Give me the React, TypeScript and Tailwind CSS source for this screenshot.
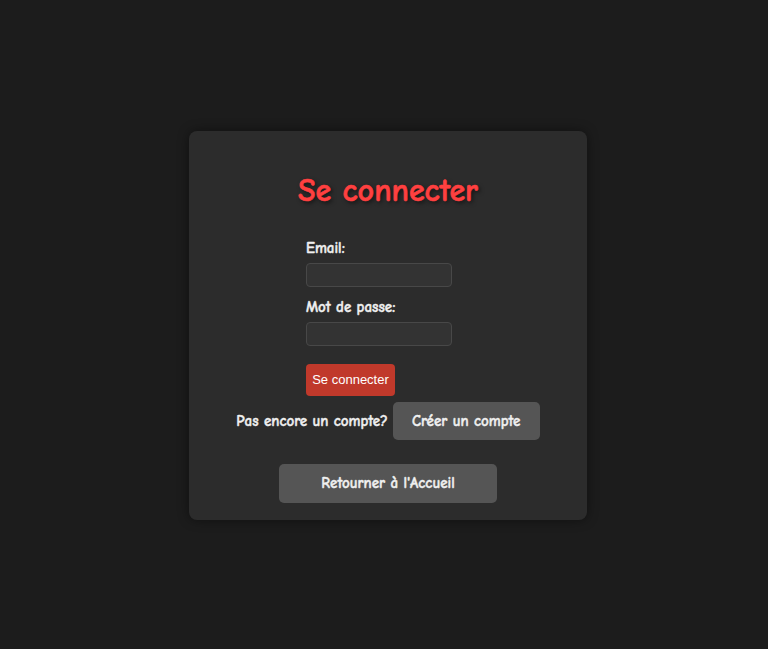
import React from 'react';

export default function App() {
  return (
    <div className="min-h-screen w-full bg-[#1c1c1c] flex items-start justify-center pt-[131px] pl-[8px] font-['Comic_Sans_MS','Comic_Neue',cursive]">
      <div className="w-[398px] h-[389px] bg-[#2c2c2c] rounded-lg shadow-[0_0_12px_rgba(0,0,0,0.45)] flex flex-col items-center pt-[43px]">
        <h1 className="text-[32px] leading-[34px] font-bold text-[#ff4040] [-webkit-text-stroke:0.6px_#ff4040] [text-shadow:2px_2px_4px_rgba(0,0,0,0.6)]">
          Se connecter
        </h1>

        <form className="w-[164px] mt-[31px] flex flex-col items-start" onSubmit={e => e.preventDefault()}>
          <label className="text-[15px] leading-[18px] font-bold text-[#f0f0f0] [-webkit-text-stroke:0.4px_#f0f0f0]">Email:</label>
          <input
            type="email"
            className="mt-[6px] w-[146px] h-[24px] rounded bg-[#333] border border-[#484848] outline-none"
          />
          <label className="mt-[11px] text-[15px] leading-[18px] font-bold text-[#f0f0f0] [-webkit-text-stroke:0.4px_#f0f0f0]">Mot de passe:</label>
          <input
            type="password"
            className="mt-[6px] w-[146px] h-[24px] rounded bg-[#333] border border-[#484848] outline-none"
          />
          <button
            type="submit"
            className="mt-[18px] h-[32px] w-[89px] rounded bg-[#c0392b] text-white text-[13px] font-['Liberation_Sans',Arial,sans-serif]"
          >
            Se connecter
          </button>
        </form>

        <div className="mt-[6px] flex items-center gap-[5px]">
          <span className="text-[15px] font-bold text-[#f0f0f0] [-webkit-text-stroke:0.4px_#f0f0f0]">Pas encore un compte?</span>
          <button className="h-[38px] w-[147px] rounded-[5px] bg-[#555] text-[15px] font-bold text-[#f0f0f0] [-webkit-text-stroke:0.4px_#f0f0f0]">
            Créer un compte
          </button>
        </div>

        <button className="mt-[24px] h-[39px] w-[218px] rounded-[5px] bg-[#555] text-[15px] font-bold text-[#f0f0f0] [-webkit-text-stroke:0.4px_#f0f0f0]">
          Retourner à l'Accueil
        </button>
      </div>
    </div>
  );
}
